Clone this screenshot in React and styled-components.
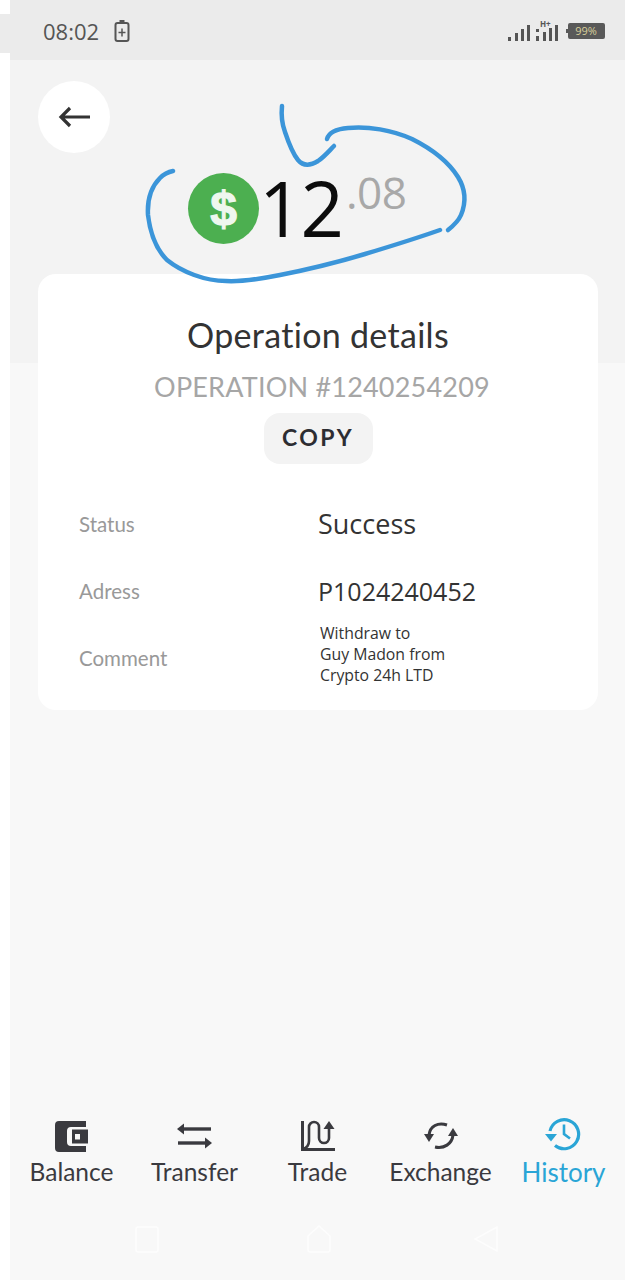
import React from 'react';
import styled, { createGlobalStyle } from 'styled-components';

const Global = createGlobalStyle`
  html, body { margin: 0; padding: 0; background: #fff; }
  * { box-sizing: border-box; }
`;

const Screen = styled.div`
  position: relative;
  width: 625px;
  height: 1280px;
  padding-left: 10px;
  background: #fff;
  overflow: hidden;
  display: flex;
  flex-direction: column;
  font-family: Lato, sans-serif;

  /* bit of status bar that pokes out on the left */
  &::before {
    content: '';
    position: absolute;
    left: 0;
    top: 14px;
    width: 10px;
    height: 39px;
    background: #ebebeb;
  }
`;

const StatusBar = styled.div`
  height: 60px;
  flex: none;
  display: flex;
  align-items: center;
  padding: 2px 20px 0 33px;
  background: #ebebeb;
`;

const Time = styled.span`
  font-family: 'Open Sans', sans-serif;
  font-size: 22px;
  color: #555;
  margin-right: 15px;
`;

const StatusRight = styled.div`
  margin-left: auto;
  display: flex;
  align-items: center;
  gap: 8px;
`;

const Body = styled.div`
  flex: 1;
  display: flex;
  flex-direction: column;
  background: linear-gradient(#f3f3f3 303px, #f8f8f8 303px);
`;

const BackRow = styled.div`
  height: 214px;
  flex: none;
  padding: 21px 0 0 28px;
`;

const BackButton = styled.button`
  width: 72px;
  height: 72px;
  border: 0;
  padding: 0;
  border-radius: 50%;
  background: #fff;
  display: flex;
  align-items: center;
  justify-content: center;
`;

const Amount = styled.div`
  position: absolute;
  left: 188px;
  top: 163px;
  display: flex;
  align-items: flex-start;
  font-family: 'Open Sans', sans-serif;
`;

const Coin = styled.div`
  width: 71px;
  height: 71px;
  margin-top: 10px;
  border-radius: 50%;
  background: #4caf50;
  color: #eef7ee;
  font: 700 48px/71px 'Liberation Sans', sans-serif;
  -webkit-text-stroke: 1.2px #eef7ee;
  text-align: center;
`;

const Whole = styled.span`
  font-size: 76px;
  line-height: 90px;
  color: #0c0c0c;
  letter-spacing: -2px;
`;

const Cents = styled.span`
  font-size: 44px;
  line-height: 58px;
  color: #a8a8a8;
  margin-left: 4px;
  letter-spacing: -0.5px;
`;

const Scribble = styled.svg`
  position: absolute;
  left: 0;
  top: 0;
  width: 625px;
  height: 300px;
  pointer-events: none;
`;

const Card = styled.div`
  margin: 0 27px 0 28px;
  height: 436px;
  padding-top: 41px;
  background: #fff;
  border-radius: 18px;
  display: flex;
  flex-direction: column;
  align-items: center;
`;

const Title = styled.h1`
  margin: 0;
  font-size: 34px;
  line-height: 40px;
  font-weight: 400;
  letter-spacing: 0.3px;
  color: #333;
`;

const Operation = styled.div`
  margin: 16px 0 0 8px;
  font-size: 27px;
  line-height: 32px;
  letter-spacing: 0.2px;
  color: #a6a6a6;
`;

const CopyButton = styled.button`
  margin-top: 10px;
  width: 109px;
  height: 51px;
  border: 0;
  padding: 0 0 4px;
  border-radius: 16px;
  background: #f3f3f3;
  color: #2d2d32;
  font: 700 23px Lato, sans-serif;
  letter-spacing: 2.5px;
`;

const Details = styled.div`
  align-self: stretch;
  margin-top: 26px;
  padding-left: 41px;
`;

const Row = styled.div`
  height: 67px;
  display: grid;
  grid-template-columns: 239px 1fr;
  align-items: center;
`;

const Label = styled.span`
  font-size: 20.5px;
  color: #999;
`;

const Value = styled.span`
  font-family: 'Open Sans', sans-serif;
  font-size: ${p => p.$size || 25}px;
  line-height: 30px;
  color: #333;
`;

const Comment = styled.span`
  font-family: 'Open Sans', sans-serif;
  font-size: 15.8px;
  line-height: 21px;
  margin: -6px 0 0 2px;
  color: #333;
  white-space: pre-line;
`;

const BottomNav = styled.div`
  margin-top: auto;
  display: grid;
  grid-template-columns: repeat(5, 123px);
  height: 82px;
`;

const NavItem = styled.div`
  display: flex;
  flex-direction: column;
  align-items: center;
  justify-content: flex-start;
  color: ${p => (p.$active ? '#2aa5d6' : '#3a3a3f')};
`;

const IconSlot = styled.div`
  height: 42px;
  display: flex;
  align-items: center;
  justify-content: center;
`;

const NavLabel = styled.span`
  font-size: ${p => (p.$active ? '26px' : '24.5px')};
  line-height: 30px;
  white-space: nowrap;
`;

const SoftKeys = styled.div`
  height: 83px;
  flex: none;
  padding: 28px 0 0 125px;
  display: grid;
  grid-template-columns: 172px 167px 24px;
  align-items: start;
`;

const Wallet = () => (
  <svg width="33" height="31" viewBox="0 0 33 31">
    <path d="M4 0h27v6H16a4 4 0 0 0-4 4v11a4 4 0 0 0 4 4h15v6H4a4 4 0 0 1-4-4V4a4 4 0 0 1 4-4z" fill="currentColor" />
    <path d="M17 8.500h16v14H17zM20 13v5.500h5V13z" fill="currentColor" fillRule="evenodd" />
  </svg>
);

const Transfer = () => (
  <svg width="35" height="26" viewBox="0 0 35 26" fill="none" stroke="currentColor" strokeWidth="3.4">
    <path d="M5 6h29" />
    <path d="M0 6l7-5.500v11z" fill="currentColor" stroke="none" />
    <path d="M1 20h29" />
    <path d="M35 20l-7-5.500v11z" fill="currentColor" stroke="none" />
  </svg>
);

const Trade = () => (
  <svg width="34" height="32" viewBox="0 0 34 32" fill="none" stroke="currentColor" strokeWidth="2.6">
    <path d="M1.500 1v28.500H34" strokeWidth="3" />
    <path d="M8 7V21Q8 27 2 29" />
    <path d="M8 7a5 5 0 0 1 10 0V18a5 5 0 0 0 10 0V7" />
    <path d="M28 1l-5.500 8h11z" fill="currentColor" stroke="none" />
  </svg>
);

const Exchange = () => (
  <svg width="34" height="28" viewBox="0 0 34 28" fill="none" stroke="currentColor" strokeWidth="3">
    <path d="M5 13C6 4 14 0 23 3" />
    <path d="M0 12h10l-5 8z" fill="currentColor" stroke="none" />
    <path d="M29 13c-1 9-9 14-18 12" />
    <path d="M34 14H24l5-8z" fill="currentColor" stroke="none" />
  </svg>
);

const History = () => (
  <svg width="37" height="38" viewBox="0 0 37 38" fill="none" stroke="currentColor" strokeWidth="3.2">
    <path d="M5 14A14.500 14.500 0 1 1 10 28.500" />
    <path d="M0 17h12l-6 7.500z" fill="currentColor" stroke="none" />
    <path d="M19 7.500V17l6 4.500" strokeWidth="2.600" />
  </svg>
);

const navItems = [
  { label: 'Balance', Icon: Wallet },
  { label: 'Transfer', Icon: Transfer },
  { label: 'Trade', Icon: Trade },
  { label: 'Exchange', Icon: Exchange },
  { label: 'History', Icon: History, active: true },
];

export default function App() {
  return (
    <Screen>
      <Global />
      <StatusBar>
        <Time>08:02</Time>
        <svg width="16" height="22" viewBox="0 0 16 22" fill="none" stroke="#555" strokeWidth="2">
          <path d="M5.500 1h5" />
          <rect x="1.500" y="3" width="13" height="18" rx="2" />
          <path d="M8 8.500v8M4.500 12.500h7" strokeWidth="1.500" />
        </svg>
        <StatusRight>
          <svg width="50" height="30" viewBox="0 -4 50 30" fill="#555">
            <rect x="0" y="17" width="3" height="4" />
            <rect x="7" y="13" width="3" height="8" />
            <rect x="13" y="9" width="3" height="12" />
            <rect x="19" y="5" width="3" height="16" />
            <rect x="28" y="16" width="3" height="5" />
            <rect x="28" y="9" width="3" height="3" />
            <rect x="35" y="12" width="3" height="9" />
            <rect x="41" y="8" width="3" height="13" />
            <rect x="47" y="5" width="3" height="16" />
            <text x="32" y="7" fontFamily="'Open Sans', sans-serif" fontSize="8" fontWeight="700">H+</text>
          </svg>
          <svg width="39" height="18" viewBox="0 0 39 18">
            <path d="M4 1h33a2 2 0 0 1 2 2v12a2 2 0 0 1-2 2H4a2 2 0 0 1-2-2v-4H0V7h2V3a2 2 0 0 1 2-2z" fill="#595959" />
            <text x="20" y="13" textAnchor="middle" fontFamily="'Open Sans', sans-serif" fontSize="11" fill="#d8cf9a">99%</text>
          </svg>
        </StatusRight>
      </StatusBar>
      <Body>
        <BackRow>
          <BackButton aria-label="Back">
            <svg width="32" height="24" viewBox="0 0 32 24" fill="none" stroke="#333" strokeWidth="3.200">
              <path d="M32 12H3M12 3l-9 9 9 9" />
            </svg>
          </BackButton>
        </BackRow>
        <Card>
          <Title>Operation details</Title>
          <Operation>OPERATION #1240254209</Operation>
          <CopyButton>COPY</CopyButton>
          <Details>
            <Row><Label>Status</Label><Value $size={27}>Success</Value></Row>
            <Row><Label>Adress</Label><Value>P1024240452</Value></Row>
            <Row>
              <Label>Comment</Label>
              <Comment>{'Withdraw to\nGuy Madon from\nCrypto 24h LTD'}</Comment>
            </Row>
          </Details>
        </Card>
        <BottomNav>
          {navItems.map(({ label, Icon, active }) => (
            <NavItem key={label} $active={active}>
              <IconSlot><Icon /></IconSlot>
              <NavLabel $active={active}>{label}</NavLabel>
            </NavItem>
          ))}
        </BottomNav>
        <SoftKeys>
          <svg width="24" height="28" viewBox="0 0 24 28" fill="none" stroke="#fdfdfd" strokeWidth="1.500">
            <rect x="1" y="2" width="22" height="25" rx="2" />
          </svg>
          <svg width="24" height="28" viewBox="0 0 24 28" fill="none" stroke="#fdfdfd" strokeWidth="1.500">
            <path d="M1 11L12 1l11 10v14a2 2 0 0 1-2 2H3a2 2 0 0 1-2-2z" />
          </svg>
          <svg width="24" height="28" viewBox="0 0 24 28" fill="none" stroke="#fdfdfd" strokeWidth="1.500">
            <path d="M23 2v24L1 14z" />
          </svg>
        </SoftKeys>
      </Body>
      <Amount>
        <Coin>$</Coin>
        <Whole>12</Whole>
        <Cents>.08</Cents>
      </Amount>
      <Scribble viewBox="0 0 625 300" fill="none" stroke="#3b95d9" strokeWidth="4.500" strokeLinecap="round" strokeLinejoin="round">
        <path d="M282 106C281 116 282 124 285 132C289 144 293 154 298 160C303 166 310 166 318 161C324 157 329 151 334 146" />
        <path d="M327 139C329 132 336 129 348 128C368 126 392 130 412 139C432 149 448 161 458 177C466 190 466 203 461 215C458 222 453 226 448 230" />
        <path d="M440 230C420 237 395 245 365 254C335 263 305 270 280 275C260 279 243 282 226 281C205 281 182 272 167 260C155 248 150 232 148 215C147 198 152 186 160 178C164 174 168 172 173 171" />
      </Scribble>
    </Screen>
  );
}
